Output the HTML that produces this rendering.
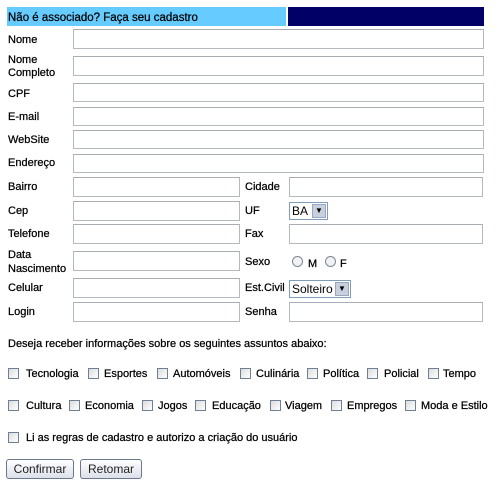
<!DOCTYPE html>
<html><head><meta charset="utf-8"><style>
body{margin:0;width:502px;height:496px;background:#fff;position:relative;font-family:"Liberation Sans",Tahoma,sans-serif;font-size:11px;color:#000;overflow:hidden;-webkit-text-stroke:0.25px #000}
.a{position:absolute;white-space:nowrap;margin-top:1px}
.i{position:absolute;border:1px solid #b4b8bf;border-top-color:#a8acb3;background:#fff;box-sizing:border-box;height:19px}
.cb{position:absolute;width:11px;height:11px;border:1px solid #6f7f95;box-sizing:border-box;background:linear-gradient(135deg,#dcdcdc,#fff);margin-top:1px}
.btn{position:absolute;height:20px;border:1px solid #6a7890;border-radius:3px;background:linear-gradient(#fff,#dde0ea);box-sizing:border-box;font-size:12px;text-align:center;line-height:18px;color:#222;-webkit-text-stroke:0}
.sel{position:absolute;height:18px;border:1px solid #7f9db9;box-sizing:border-box;background:#fff;font-size:12px;line-height:16px;padding-left:2px;-webkit-text-stroke:0}
.sel b{position:absolute;right:1px;top:1px;width:14px;height:14px;background:#c8d0e0;border:1px solid #98a6c0;box-sizing:border-box;font-size:8px;line-height:12px;text-align:center;font-weight:normal}
.r{position:absolute;width:11px;height:11px;border:1px solid #7a8898;border-radius:50%;box-sizing:border-box;background:#f2f2f2}
</style></head><body>
<div class="a" style="left:7px;top:7px;width:279px;height:19px;background:#66ccff;margin:0"></div>
<div class="a" style="left:288px;top:7px;width:196px;height:19px;background:#000066;margin:0"></div>
<div class="a" style="left:8px;top:11px;font-size:11.5px">Não é associado? Faça seu cadastro</div>

<div class="a" style="left:8px;top:33px">Nome</div><div class="i" style="left:73px;top:29px;width:411px;height:20px"></div>
<div class="a" style="left:8px;top:53px;line-height:13px">Nome<br>Completo</div><div class="i" style="left:73px;top:56px;width:411px;height:20px"></div>
<div class="a" style="left:8px;top:87px">CPF</div><div class="i" style="left:73px;top:83px;width:411px"></div>
<div class="a" style="left:8px;top:110px">E-mail</div><div class="i" style="left:73px;top:107px;width:411px"></div>
<div class="a" style="left:8px;top:133px">WebSite</div><div class="i" style="left:73px;top:130px;width:411px"></div>
<div class="a" style="left:8px;top:156px">Endereço</div><div class="i" style="left:73px;top:154px;width:411px"></div>

<div class="a" style="left:8px;top:180px">Bairro</div><div class="i" style="left:73px;top:177px;width:167px;height:20px"></div>
<div class="a" style="left:245px;top:180px">Cidade</div><div class="i" style="left:289px;top:177px;width:194px;height:20px"></div>
<div class="a" style="left:8px;top:204px">Cep</div><div class="i" style="left:73px;top:201px;width:167px;height:20px"></div>
<div class="a" style="left:245px;top:204px">UF</div><div class="sel" style="left:289px;top:202px;width:39px">BA<b>&#9660;</b></div>
<div class="a" style="left:8px;top:227px">Telefone</div><div class="i" style="left:73px;top:224px;width:167px;height:20px"></div>
<div class="a" style="left:245px;top:227px">Fax</div><div class="i" style="left:289px;top:224px;width:194px;height:20px"></div>
<div class="a" style="left:8px;top:247px;line-height:14px">Data<br>Nascimento</div><div class="i" style="left:73px;top:251px;width:167px;height:20px"></div>
<div class="a" style="left:245px;top:255px">Sexo</div>
<div class="r" style="left:292px;top:256px"></div><div class="a" style="left:308px;top:257px">M</div>
<div class="r" style="left:325px;top:256px"></div><div class="a" style="left:340px;top:257px">F</div>
<div class="a" style="left:8px;top:281px">Celular</div><div class="i" style="left:73px;top:278px;width:167px;height:20px"></div>
<div class="a" style="left:245px;top:281px">Est.Civil</div><div class="sel" style="left:289px;top:280px;width:62px">Solteiro<b>&#9660;</b></div>
<div class="a" style="left:8px;top:305px">Login</div><div class="i" style="left:73px;top:302px;width:167px;height:20px"></div>
<div class="a" style="left:245px;top:305px">Senha</div><div class="i" style="left:289px;top:302px;width:194px;height:20px"></div>

<div class="a" style="left:8px;top:337px">Deseja receber informações sobre os seguintes assuntos abaixo:</div>

<div class="cb" style="left:8px;top:367px"></div><div class="a" style="left:26px;top:367px">Tecnologia</div>
<div class="cb" style="left:88px;top:367px"></div><div class="a" style="left:104px;top:367px">Esportes</div>
<div class="cb" style="left:157px;top:367px"></div><div class="a" style="left:173px;top:367px">Automóveis</div>
<div class="cb" style="left:240px;top:367px"></div><div class="a" style="left:256px;top:367px">Culinária</div>
<div class="cb" style="left:307px;top:367px"></div><div class="a" style="left:323px;top:367px">Política</div>
<div class="cb" style="left:367px;top:367px"></div><div class="a" style="left:384px;top:367px">Policial</div>
<div class="cb" style="left:428px;top:367px"></div><div class="a" style="left:443px;top:367px">Tempo</div>

<div class="cb" style="left:8px;top:399px"></div><div class="a" style="left:26px;top:399px">Cultura</div>
<div class="cb" style="left:69px;top:399px"></div><div class="a" style="left:85px;top:399px">Economia</div>
<div class="cb" style="left:142px;top:399px"></div><div class="a" style="left:158px;top:399px">Jogos</div>
<div class="cb" style="left:195px;top:399px"></div><div class="a" style="left:212px;top:399px">Educação</div>
<div class="cb" style="left:270px;top:399px"></div><div class="a" style="left:285px;top:399px">Viagem</div>
<div class="cb" style="left:331px;top:399px"></div><div class="a" style="left:347px;top:399px">Empregos</div>
<div class="cb" style="left:405px;top:399px"></div><div class="a" style="left:421px;top:399px">Moda e Estilo</div>

<div class="cb" style="left:8px;top:431px"></div><div class="a" style="left:26px;top:431px">Li as regras de cadastro e autorizo a criação do usuário</div>

<div class="btn" style="left:6px;top:459px;width:68px">Confirmar</div>
<div class="btn" style="left:80px;top:459px;width:62px">Retomar</div>
</body></html>
